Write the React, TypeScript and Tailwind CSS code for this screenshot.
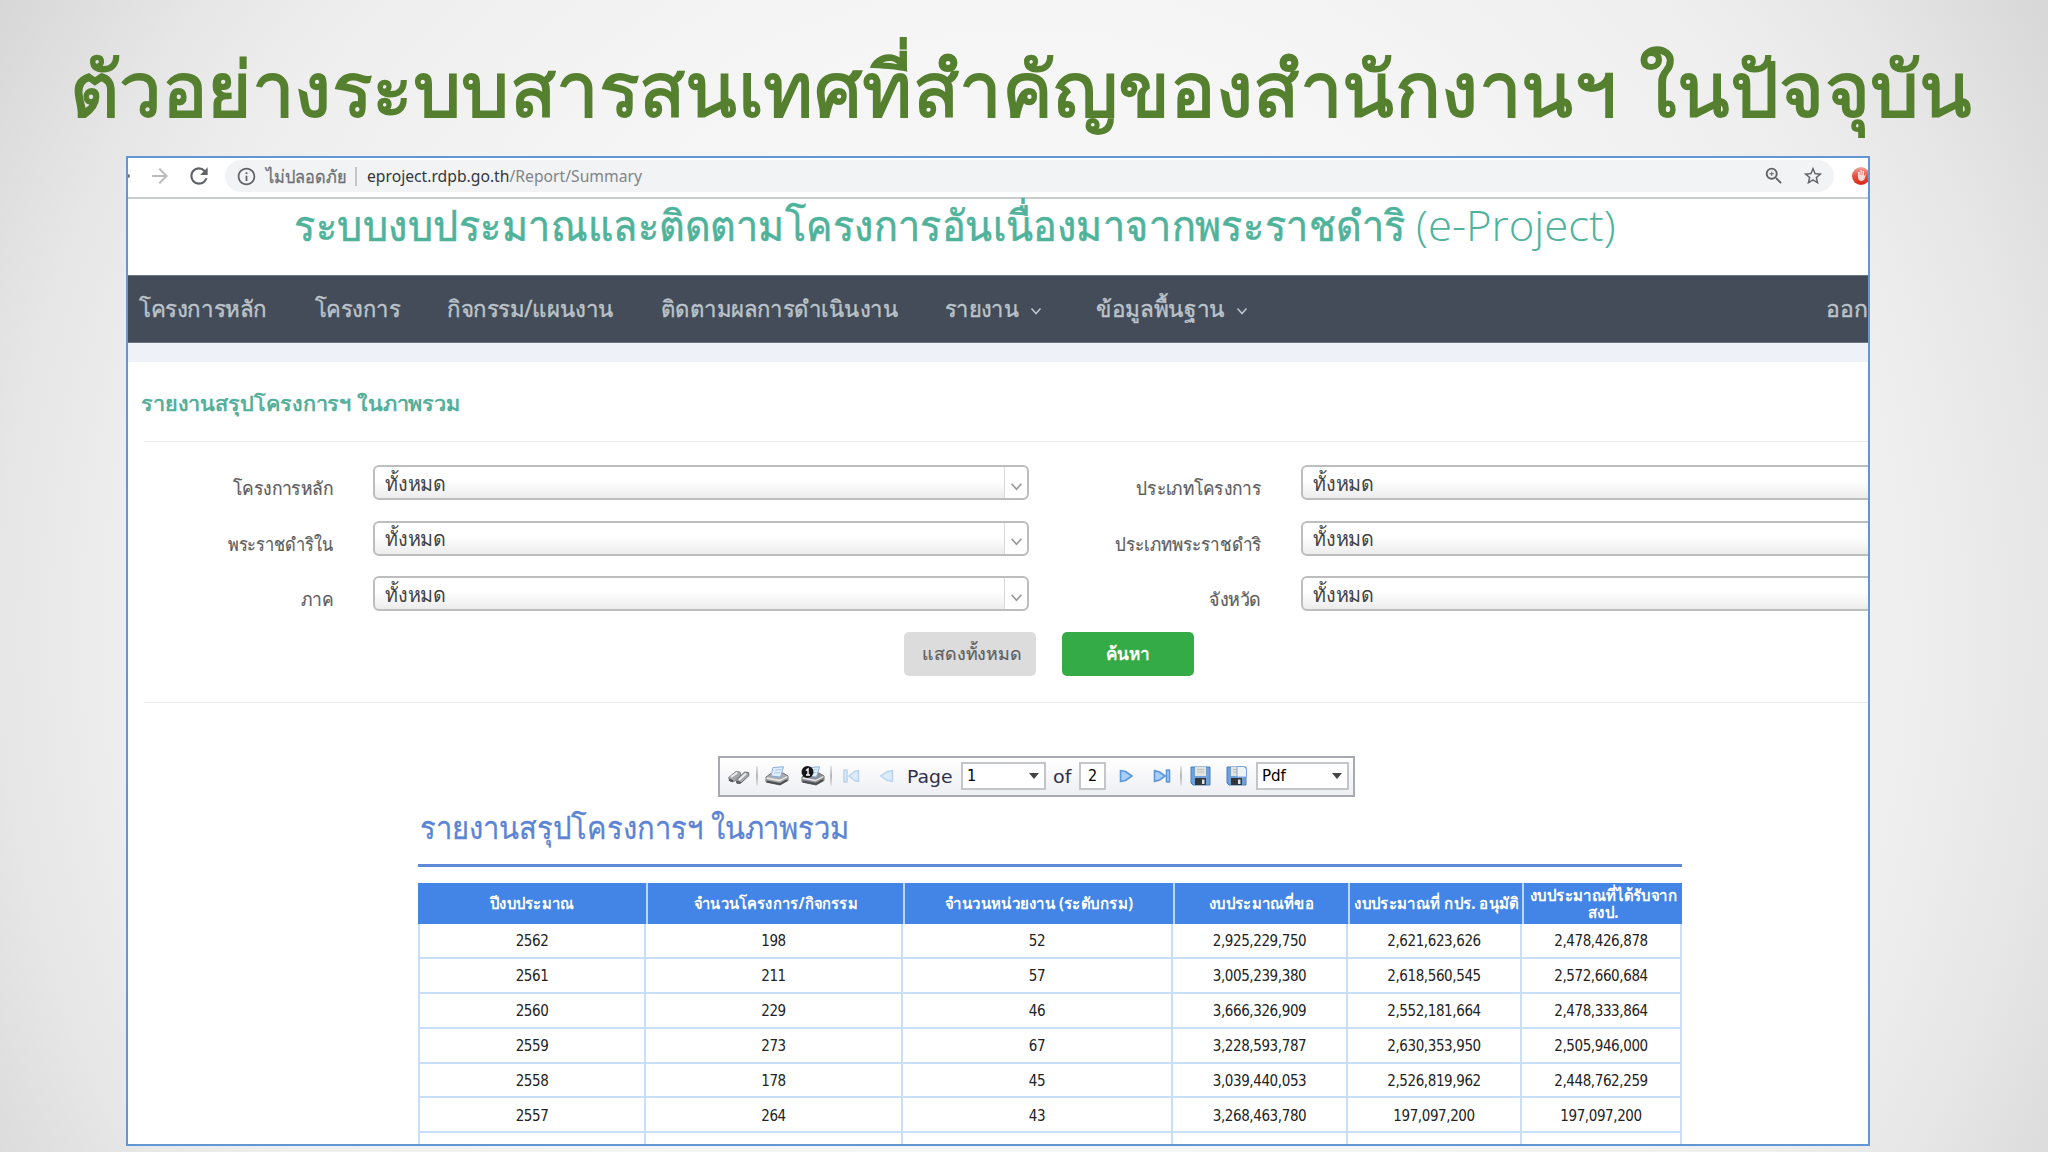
import { useLayoutEffect, useRef, useState } from 'react';
import { MdArrowForward, MdInfoOutline, MdRefresh, MdStarBorder, MdZoomIn } from 'react-icons/md';

const ROWS = [
  ['2562', '198', '52', '2,925,229,750', '2,621,623,626', '2,478,426,878'],
  ['2561', '211', '57', '3,005,239,380', '2,618,560,545', '2,572,660,684'],
  ['2560', '229', '46', '3,666,326,909', '2,552,181,664', '2,478,333,864'],
  ['2559', '273', '67', '3,228,593,787', '2,630,353,950', '2,505,946,000'],
  ['2558', '178', '45', '3,039,440,053', '2,526,819,962', '2,448,762,259'],
  ['2557', '264', '43', '3,268,463,780', '197,097,200', '197,097,200'],
  ['', '', '', '', '', ''],
];

const COLS = 'grid grid-cols-[228px_257px_270px_175px_174px_160px]';

// Stretches or squeezes a single line of text to the width of its box
function FitText({ className = '', children }: { className?: string; children: React.ReactNode }) {
  const box = useRef<HTMLSpanElement>(null);
  const text = useRef<HTMLSpanElement>(null);
  const [scale, setScale] = useState(1);

  useLayoutEffect(() => {
    if (box.current && text.current && text.current.offsetWidth) {
      setScale(box.current.offsetWidth / text.current.offsetWidth);
    }
  }, []);

  return (
    <span ref={box} className={`inline-block shrink-0 whitespace-nowrap text-left ${className}`}>
      <span ref={text} className="inline-block origin-left" style={{ transform: `scaleX(${scale})` }}>
        {children}
      </span>
    </span>
  );
}

function Chevron({ className = '' }: { className?: string }) {
  return (
    <svg className={className} viewBox="0 0 12 8" fill="none" stroke="currentColor" strokeWidth={1.6}>
      <path d="M1.5 1.5L6 6.5l4.500-5" />
    </svg>
  );
}

function BrowserBar() {
  return (
    <div className="flex h-[41px] items-start border-b-2 border-[#c9cccc] bg-white">
      <div className="flex h-[35px] w-[97px] shrink-0 items-center">
        <span className="h-1 w-[2px] rounded-r bg-[#777]" />
        <MdArrowForward className="ml-[18px] h-6 w-6 text-[#bcbcbc]" />
        <MdRefresh className="ml-[14px] h-[26px] w-[26px] text-[#5f6368]" />
      </div>
      <div className="mt-[2px] flex h-[32px] w-[1609px] shrink-0 items-center rounded-full bg-[#f1f3f4] pl-[11px] text-[17px] text-[#80858a]">
        <MdInfoOutline className="h-[21px] w-[21px] text-[#5f6368]" />
        <FitText className="ml-[9px] w-[81px] text-[18px] text-[#6b7075] [-webkit-text-stroke:0.3px]">ไม่ปลอดภัย</FitText>
        <span className="ml-[8px] h-[19px] w-[2px] bg-[#c3c6c9]" />
        <FitText className="ml-[10px] w-[275px]">
          <span className="text-[#33373b]">eproject.rdpb.go.th</span>/Report/Summary
        </FitText>
        <MdZoomIn className="ml-auto h-[22px] w-[22px] text-[#5f6368]" />
        <MdStarBorder className="mr-[10px] ml-[17px] h-[22px] w-[22px] text-[#5f6368]" />
      </div>
      <svg className="mt-[9px] ml-[18px] h-[18px] w-[18px] shrink-0" viewBox="0 0 18 18">
        <defs>
          <linearGradient id="stop" x1="0" y1="0" x2="0" y2="1">
            <stop offset="0" stopColor="#f3a59b" />
            <stop offset="0.5" stopColor="#e2533f" />
            <stop offset="1" stopColor="#dc2414" />
          </linearGradient>
        </defs>
        <circle cx="9" cy="9" r="9" fill="url(#stop)" />
        <path d="M6 5v5c0 2.500 1.500 4 3.500 4s3-1.500 3.500-3.500L14 7l-2 2V4l-1.500 0v4h-.7V3H8.500v5H7.800V5z" fill="#fff" opacity=".8" />
      </svg>
    </div>
  );
}

function NavBar() {
  return (
    <nav className="flex h-[68px] items-center overflow-hidden border-y border-[#6d757e] bg-[#434c58] pb-[2px] text-[23px] text-[#bcc3ca] [-webkit-text-stroke:0.4px]">
      <FitText className="ml-[11px] w-[128px]">โครงการหลัก</FitText>
      <FitText className="ml-[48px] w-[85px]">โครงการ</FitText>
      <FitText className="ml-[47px] w-[167px]">กิจกรรม/แผนงาน</FitText>
      <FitText className="ml-[47px] w-[237px]">ติดตามผลการดำเนินงาน</FitText>
      <FitText className="ml-[47px] w-[74px]">รายงาน</FitText>
      <Chevron className="mt-[6px] ml-[11px] h-[8px] w-[12px] shrink-0" />
      <FitText className="ml-[54px] w-[129px]">ข้อมูลพื้นฐาน</FitText>
      <Chevron className="mt-[6px] ml-[11px] h-[8px] w-[12px] shrink-0" />
      <FitText className="ml-auto w-[42px]">ออก</FitText>
    </nav>
  );
}

function Select({ className = '' }: { className?: string }) {
  return (
    <div className={`flex h-[35px] shrink-0 items-center rounded-[6px] border-2 border-[#bdbdbd] bg-linear-to-b from-white from-45% to-[#ececec] text-[#444] ${className}`}>
      <FitText className="ml-[10px] w-[61px] pt-[2px] text-[20px]">ทั้งหมด</FitText>
      <div className="ml-auto flex h-full w-[23px] items-center justify-center rounded-r-[5px] border-l border-[#d9d9d9] bg-white pt-[7px] text-[#9a9a9a]">
        <Chevron className="h-[9px] w-[13px]" />
      </div>
    </div>
  );
}

function FilterRow({ left, right }: { left: React.ReactNode; right: React.ReactNode }) {
  return (
    <div className="flex h-[35px] text-[18.500px] leading-[46px] text-[#5c5c5c]">
      <div className="w-[205px] shrink-0 text-right [-webkit-text-stroke:0.2px]">{left}</div>
      <Select className="ml-[40px] w-[656px]" />
      <div className="w-[232px] shrink-0 text-right [-webkit-text-stroke:0.2px]">{right}</div>
      <Select className="ml-[40px] w-[656px]" />
    </div>
  );
}

function Binoculars() {
  return (
    <svg className="ml-[7px] h-[17px] w-[23px]" viewBox="0 0 23 17">
      <path d="M1.500 9.500L9 3.500l4 .5 1 3-7 6.500-4-.5z" fill="#a3a5a8" stroke="#85888b" />
      <path d="M9 12.500L17.500 4l4 .5.500 3L14 15l-4 .5z" fill="#a3a5a8" stroke="#6c6f72" />
      <path d="M4 9l6.500-4.500M12 12l7-6.500" stroke="#ededee" strokeWidth="2" />
      <path d="M2 11.500l4 2M9.500 13.500l4 1.500" stroke="#55585b" strokeWidth="2.200" />
    </svg>
  );
}

function Printer({ single = false }: { single?: boolean }) {
  return (
    <svg className="h-[20px] w-[24px]" viewBox="0 0 24 20">
      <path d="M1 11l5-3.500 12-.5 5 3v4.500L15 19 1 16z" fill={single ? '#8d8f92' : '#a9abad'} stroke="#717376" />
      <path d="M8 1.500l10.500-.7L15.500 11 6 10z" fill="#e1eefb" stroke="#86aedb" />
      <path d="M10 4l6-.5M9.200 7l6-.5" stroke="#a9c8ea" />
      <path d="M1.500 12l13 2.500 8-4" fill="none" stroke="#ecedee" strokeWidth="1.300" />
      <path d="M2 15.500l13 2.500 7-4" fill="none" stroke="#4a4c4e" strokeWidth="2" />
      {single && (
        <>
          <circle cx="6.500" cy="6" r="6" fill="#161616" />
          <path d="M5 4.500l2-1.500v6M5 9h4" stroke="#fff" strokeWidth="1.400" fill="none" />
        </>
      )}
    </svg>
  );
}

function Disk({ page = false }: { page?: boolean }) {
  return (
    <svg className="h-[20px] w-[21px]" viewBox="0 0 21 20">
      <path d="M1 1h19v18H3l-2-2z" fill="#6ea1da" stroke="#4c7fbb" />
      <path d="M5 1h11v9H5z" fill="#e3e3df" />
      <path d="M7 3.500h7M7 6h7" stroke="#bdbdb8" />
      <path d="M5 12h11v7H5z" fill="#33373c" />
      <path d="M12 13.500h2.500V18H12z" fill="#dfe3e8" />
      {page && <path d="M11 .5h7l2.500 2.500v8H11z" fill="#eef4fd" stroke="#7ea3dc" />}
    </svg>
  );
}

function Divider({ className = '' }: { className?: string }) {
  return <span className={`h-[20px] w-[2px] bg-linear-to-b from-[#e3e4e7] via-[#b5b7bb] to-[#e3e4e7] ${className}`} />;
}

function Caret() {
  return <span className="mr-[5px] ml-auto border-x-[5px] border-t-[6px] border-x-transparent border-t-[#444]" />;
}

function ReportToolbar() {
  return (
    <div className="ml-[590px] flex h-[41px] w-[637px] items-center border-2 border-[#a7aab0] bg-linear-to-b from-white to-[#eeeff3] pb-px font-['DejaVu_Sans'] text-[18px] text-[#30304a] [&>*]:shrink-0">
      <Binoculars />
      <Divider className="ml-[6px]" />
      <span className="ml-[7px]"><Printer /></span>
      <span className="ml-[12px]"><Printer single /></span>
      <Divider className="ml-[5px]" />
      <svg className="ml-[11px] h-[14px] w-[17px]" viewBox="0 0 17 14" fill="#dcebf8" stroke="#b9d3ec" strokeWidth="1.500">
        <path d="M1 1h3v12H1zM15.500 1.500v11l-4-1L6 7l5.500-4.500z" strokeLinejoin="round" />
      </svg>
      <svg className="ml-[19px] h-[14px] w-[15px]" viewBox="0 0 15 14" fill="#dcebf8" stroke="#b9d3ec" strokeWidth="1.500">
        <path d="M13.500 1.500v11l-6-1.500-6-4 6-4z" strokeLinejoin="round" />
      </svg>
      <FitText className="ml-[13px] w-[46px]">Page</FitText>
      <div className="ml-[8px] flex h-[28px] w-[85px] items-center border-2 border-[#c3c5c9] bg-white pl-[4px] font-['DejaVu_Sans_Condensed'] text-[16px] text-black">
        1<Caret />
      </div>
      <FitText className="ml-[7px] w-[18px]">of</FitText>
      <div className="ml-[8px] flex h-[28px] w-[27px] items-center justify-center border-2 border-[#c3c5c9] bg-white font-['DejaVu_Sans_Condensed'] text-[16px] text-black">
        2
      </div>
      <svg className="ml-[13px] h-[14px] w-[14px]" viewBox="0 0 14 14" fill="#a8d0f5" stroke="#5c97da" strokeWidth="1.600">
        <path d="M1.500 1.500l5 1L13 7l-6.500 4.500-5 1z" strokeLinejoin="round" />
      </svg>
      <svg className="ml-[20px] h-[14px] w-[18px]" viewBox="0 0 18 14" fill="#a8d0f5" stroke="#5c97da" strokeWidth="1.600">
        <path d="M1.500 1.500l5 1.500L12 7l-5.500 4-5 1.500zM13.500 1h3v12h-3z" strokeLinejoin="round" />
      </svg>
      <Divider className="ml-[9px]" />
      <span className="ml-[8px]"><Disk /></span>
      <span className="ml-[15px]"><Disk page /></span>
      <div className="ml-[9px] flex h-[28px] w-[93px] items-center border-2 border-[#c3c5c9] bg-white pl-[4px] font-['DejaVu_Sans_Condensed'] text-black">
        <FitText className="w-[24px] text-[16px]">Pdf</FitText>
        <Caret />
      </div>
    </div>
  );
}

function ReportTable() {
  return (
    <div className="mt-[16px] w-[1264px]">
      <div className={`${COLS} h-[41px] bg-[#4285e6] text-[16px] leading-[17px] font-bold text-white [&>*]:flex [&>*]:items-center [&>*]:justify-center [&>*+*]:border-l-2 [&>*+*]:border-[#bcd6f8]`}>
        <div><FitText className="w-[84px]">ปีงบประมาณ</FitText></div>
        <div><FitText className="w-[164px]">จำนวนโครงการ/กิจกรรม</FitText></div>
        <div><FitText className="w-[188px]">จำนวนหน่วยงาน (ระดับกรม)</FitText></div>
        <div><FitText className="w-[105px]">งบประมาณที่ขอ</FitText></div>
        <div><FitText className="w-[165px]">งบประมาณที่ กปร. อนุมัติ</FitText></div>
        <div className="flex-col">
          <FitText className="w-[147px]">งบประมาณที่ได้รับจาก</FitText>
          <FitText className="w-[31px]">สงป.</FitText>
        </div>
      </div>
      {ROWS.map((row, r) => (
        <div key={r} className={`${COLS} h-[34.900px] text-[15px] text-[#222]`}>
          {row.map((cell, c) => (
            <div key={c} className="flex items-center justify-center border-r-2 border-b-2 border-[#c8dff9] pt-[2px] font-['DejaVu_Sans_Condensed'] tracking-[-0.400px] first:border-l-2">
              {cell}
            </div>
          ))}
        </div>
      ))}
    </div>
  );
}

export default function App() {
  return (
    <div className="h-[1152px] w-[2048px] overflow-hidden bg-[radial-gradient(1448px_1500px_at_50%_55%,#fafafa_0%,#f5f5f5_42%,#eeeeee_62%,#e6e6e6_71%,#d6d6d6_83%)] font-['Noto_Sans',sans-serif]">
      <h1 className="flex h-[156px] pt-5 pl-[70px] text-[77px] leading-[135px] text-[#55802f] [-webkit-text-stroke:1.8px]">
        <FitText className="w-[1546px]">ตัวอย่างระบบสารสนเทศที่สำคัญของสำนักงานฯ</FitText>
        <FitText className="ml-[23px] w-[333px]">ในปัจจุบัน</FitText>
      </h1>

      <div className="ml-[126px] h-[990px] w-[1744px] overflow-hidden border-2 border-[#6496d3] bg-white">
        <BrowserBar />

        <header className="flex h-[76px] pl-[166px] text-[42px] leading-[51px] text-[#4fb39b]">
          <FitText className="w-[1112px] [-webkit-text-stroke:0.6px]">ระบบงบประมาณและติดตามโครงการอันเนื่องมาจากพระราชดำริ</FitText>
          <FitText className="ml-[10px] w-[200px] font-['Open_Sans'] font-light">(e-Project)</FitText>
        </header>

        <NavBar />
        <div className="h-[19px] bg-[#eef1f7]" />

        <h2 className="h-[79px] pl-[13px] text-[20px] leading-[84px] font-bold text-[#55b09b]">
          <FitText className="w-[319px]">รายงานสรุปโครงการฯ ในภาพรวม</FitText>
        </h2>
        <div className="ml-[16px] h-px bg-[#ececec]" />

        <div className="flex flex-col gap-[20.500px] pt-[23px]">
          <FilterRow
            left={<FitText className="w-[100px]">โครงการหลัก</FitText>}
            right={<FitText className="w-[125px]">ประเภทโครงการ</FitText>}
          />
          <FilterRow
            left={<FitText className="w-[105px]">พระราชดำริใน</FitText>}
            right={<FitText className="w-[146px]">ประเภทพระราชดำริ</FitText>}
          />
          <FilterRow
            left={<FitText className="w-[32px]">ภาค</FitText>}
            right={<FitText className="w-[52px]">จังหวัด</FitText>}
          />
        </div>

        <div className="mt-[21px] ml-[776px] flex gap-[26px] text-[18px]">
          <button className="flex h-[44px] w-[132px] items-center justify-center rounded-[5px] bg-[#dcdcdc] pb-[2px] pl-1 text-[#5f5f5f] [-webkit-text-stroke:0.2px]">
            <FitText className="w-[100px]">แสดงทั้งหมด</FitText>
          </button>
          <button className="flex h-[44px] w-[132px] items-center justify-center rounded-[5px] bg-[#35ab47] pb-[2px] font-bold text-white">
            <FitText className="w-[44px]">ค้นหา</FitText>
          </button>
        </div>
        <div className="mt-[26px] mb-[53px] ml-[16px] h-px bg-[#ececec]" />

        <ReportToolbar />

        <div className="ml-[290px] w-[1264px]">
          <div className="h-[70px] border-b-[3px] border-[#5f8ad8] pl-[2px] text-[31px] leading-[61px] text-[#5b84d4] [-webkit-text-stroke:0.3px]">
            <FitText className="w-[429px]">รายงานสรุปโครงการฯ ในภาพรวม</FitText>
          </div>
          <ReportTable />
        </div>
      </div>
    </div>
  );
}
